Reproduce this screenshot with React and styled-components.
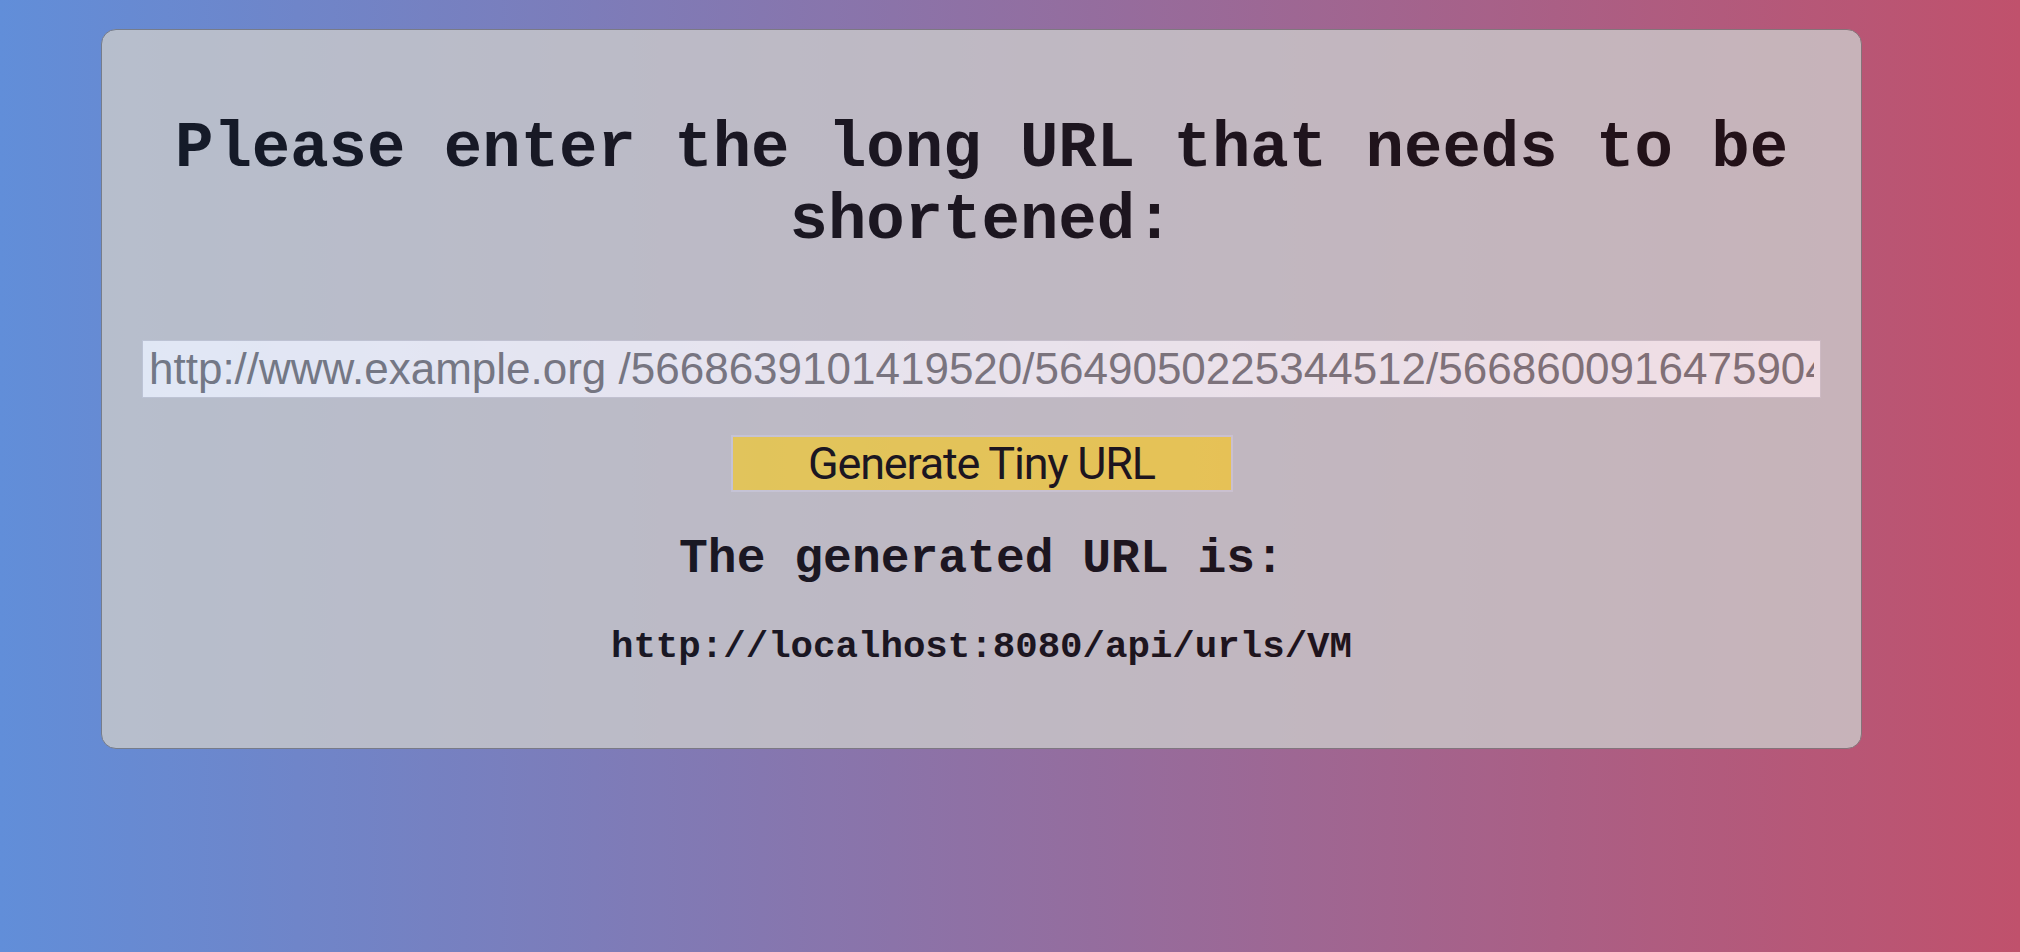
import React from "react";
import styled, { createGlobalStyle } from "styled-components";

const GlobalStyle = createGlobalStyle`
  html, body {
    margin: 0;
    padding: 0;
  }
  body {
    font-family: "Liberation Mono", monospace;
    font-size: 32px;
  }
`;

const Page = styled.div`
  min-height: 100vh;
  box-sizing: border-box;
  padding: 29px 0 0 101px;
  background: linear-gradient(to right, #618ed9, #c0516c);
`;

const Card = styled.div`
  box-sizing: border-box;
  width: 1761px;
  padding: 40px 40px 43px;
  background: #cbcbcb;
  border: 1px solid #7a7a7a;
  border-radius: 15px;
  opacity: 0.8;
  text-align: center;
  color: #000;
`;

const Title = styled.h1`
  font-family: "Liberation Mono", monospace;
  font-weight: 700;
  font-size: 64px;
  margin: 43px 0;
`;

const UrlInput = styled.input`
  display: block;
  box-sizing: border-box;
  width: 100%;
  height: 58px;
  margin: 83px 0 0;
  padding: 2px 6px;
  border: 1px solid #d2d2d6;
  background: #fff;
  font-family: "Liberation Sans", Arial, sans-serif;
  font-size: 44px;
  color: #000;
  outline: none;
  &::placeholder {
    color: #757575;
    opacity: 1;
  }
`;

const GenerateButton = styled.button`
  display: block;
  box-sizing: border-box;
  width: 502px;
  height: 57px;
  margin: 37px auto 0;
  padding: 0;
  border: 2px solid #d6d6de;
  background: #f9d847;
  color: #000;
  font-family: Roboto, "Liberation Sans", sans-serif;
  font-size: 45px;
  letter-spacing: -1.2px;
  cursor: pointer;
`;

const ResultLabel = styled.h2`
  font-family: "Liberation Mono", monospace;
  font-weight: 700;
  font-size: 48px;
  margin: 40px 0;
`;

const ResultUrl = styled.h3`
  font-family: "Liberation Mono", monospace;
  font-weight: 700;
  font-size: 37.44px;
  margin: 37.44px 0;
`;

export default function App() {
  return (
    <>
      <GlobalStyle />
      <Page>
        <Card>
          <Title>Please enter the long URL that needs to be shortened:</Title>
          <UrlInput
            type="text"
            placeholder="http://www.example.org /5668639101419520/5649050225344512/5668600916475904"
          />
          <GenerateButton type="button">Generate Tiny URL</GenerateButton>
          <ResultLabel>The generated URL is:</ResultLabel>
          <ResultUrl>http://localhost:8080/api/urls/VM</ResultUrl>
        </Card>
      </Page>
    </>
  );
}
